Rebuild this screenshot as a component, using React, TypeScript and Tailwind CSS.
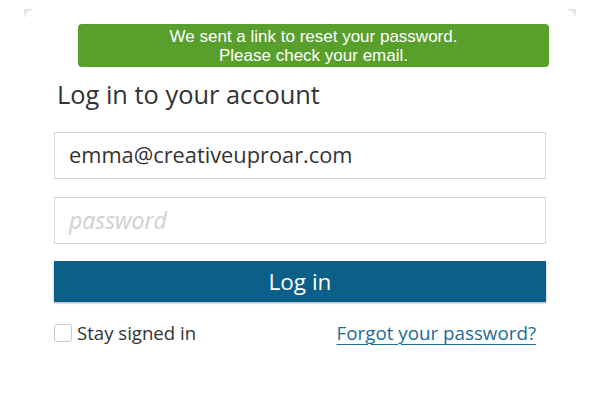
export default function App() {
  return (
    <div className="w-[600px] h-[400px] bg-white overflow-hidden" style={{ fontFamily: "'Open Sans', Lato, sans-serif" }}>
      <div className="ml-[24px] mt-[9px] w-[552px] h-[391px] bg-gradient-to-b from-[#e4e4e4] to-white to-[30px]">
        <div className="h-full bg-white rounded-t-[12px] pt-[15px] px-[30px]">
          <div
            className="ml-[24px] w-[471px] h-[43px] rounded-[4px] bg-[#58a02b] text-white text-[17px] leading-[19px] flex flex-col items-center justify-center"
            style={{ fontFamily: "'Liberation Sans', Arial, sans-serif" }}
          >
            <span>We sent a link to reset your password.</span>
            <span>Please check your email.</span>
          </div>
          <h1 className="mt-[12px] ml-[3px] text-[25.4px] leading-[30px] text-[#333]">Log in to your account</h1>
          <div className="mt-[23px] h-[47px] border border-[#d6d6d6] flex items-center px-[14px] text-[21.8px] text-[#333]">
            emma@creativeuproar.com
          </div>
          <div className="mt-[18px] h-[47px] border border-[#d6d6d6] flex items-center px-[14px] text-[23px] italic text-[#d0d0d0]">
            password
          </div>
          <button className="mt-[17px] w-full h-[41px] bg-[#0b5f88] text-white text-[22.5px] shadow-[0_1px_2px_rgba(0,0,0,0.35)]">
            Log in
          </button>
          <div className="mt-[17px] flex items-center justify-between">
            <label className="flex items-center gap-[5px] text-[18.6px] text-[#333]">
              <span className="w-[18px] h-[18px] rounded-[3px] border border-[#c8c8c8] bg-white" />
              Stay signed in
            </label>
            <a className="mr-[10px] text-[18.8px] text-[#1c6c94] underline underline-offset-[4px] decoration-[1px]">
              Forgot your password?
            </a>
          </div>
        </div>
      </div>
    </div>
  );
}
